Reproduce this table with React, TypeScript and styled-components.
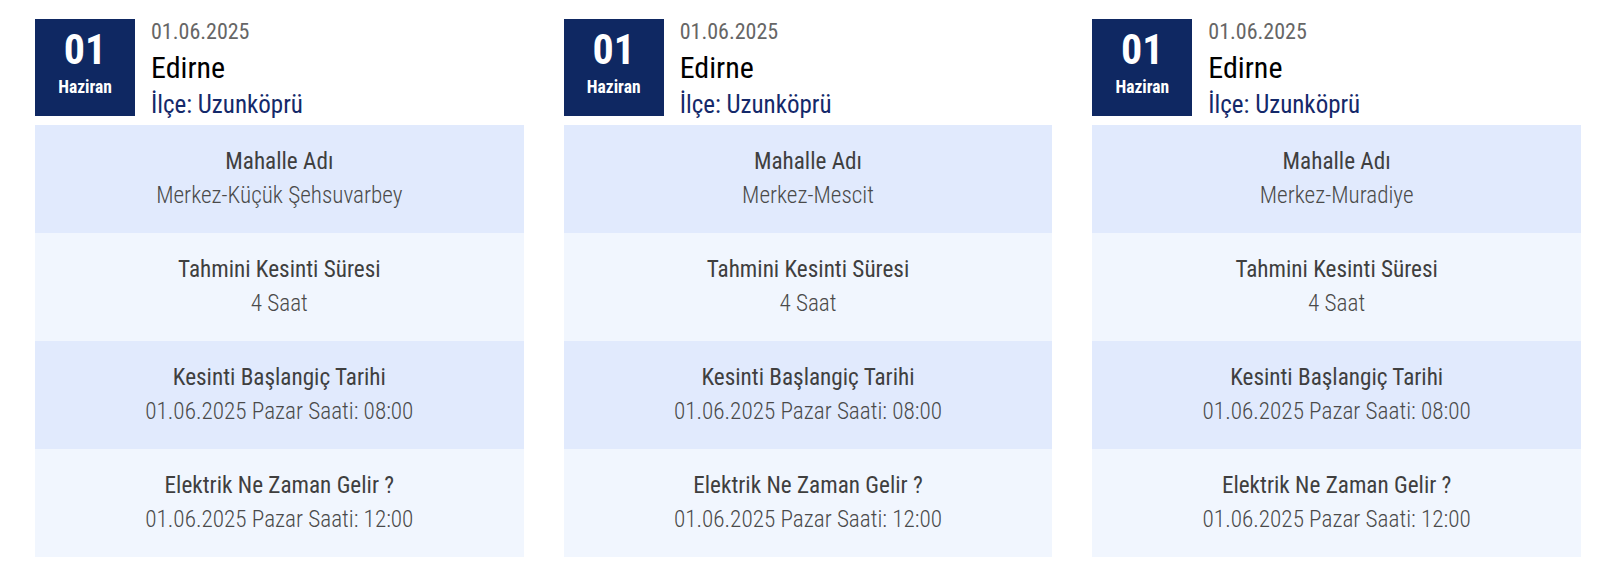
import React from "react";
import styled, { createGlobalStyle } from "styled-components";

const GlobalStyle = createGlobalStyle`
  html, body {
    margin: 0;
    padding: 0;
    background: #ffffff;
  }
  body {
    font-family: "Roboto Condensed", Roboto, "Liberation Sans", sans-serif;
    font-stretch: 75%;
  }
`;

const Page = styled.main`
  display: grid;
  grid-template-columns: repeat(3, 1fr);
  column-gap: 40px;
  padding: 19px 35px 0;
`;

const Card = styled.article`
  display: flex;
  flex-direction: column;
`;

const Header = styled.header`
  display: flex;
  align-items: flex-start;
  gap: 16px;
  margin-bottom: 5px;
`;

const DateBox = styled.div`
  flex: 0 0 100px;
  height: 97px;
  background: #0f2862;
  color: #ffffff;
  display: flex;
  flex-direction: column;
  align-items: center;
  padding-top: 6px;
  box-sizing: border-box;
`;

const Day = styled.span`
  font-size: 42px;
  line-height: 49px;
  font-weight: 700;
`;

const Month = styled.span`
  font-size: 17.5px;
  line-height: 20px;
  font-weight: 700;
  margin-top: 3px;
`;

const HeadText = styled.div`
  display: flex;
  flex-direction: column;
`;

const HeadDate = styled.span`
  font-size: 22px;
  line-height: 26px;
  color: #666666;
`;

const City = styled.span`
  font-size: 30px;
  line-height: 34px;
  margin-top: 6px;
  color: #000000;
`;

const District = styled.span`
  font-size: 25px;
  line-height: 30px;
  margin-top: 5px;
  color: #14296a;
`;

const InfoRow = styled.div<{ $shade: "dark" | "light" }>`
  height: 108px;
  box-sizing: border-box;
  padding: 19px 10px 0;
  background: ${(p) => (p.$shade === "dark" ? "#e1eafd" : "#f1f6fe")};
  display: flex;
  flex-direction: column;
  align-items: center;
  text-align: center;
`;

const Label = styled.span`
  font-size: 23.2px;
  line-height: 34px;
  font-weight: 400;
  color: #3f3f3f;
`;

const Value = styled.span`
  font-size: 23.2px;
  line-height: 34px;
  font-weight: 300;
  color: #4a4a4a;
`;

type Outage = {
  day: string;
  month: string;
  date: string;
  city: string;
  district: string;
  neighbourhood: string;
  duration: string;
  start: string;
  end: string;
};

const outages: Outage[] = [
  "Merkez-Küçük Şehsuvarbey",
  "Merkez-Mescit",
  "Merkez-Muradiye",
].map((n) => ({
  day: "01",
  month: "Haziran",
  date: "01.06.2025",
  city: "Edirne",
  district: "İlçe: Uzunköprü",
  neighbourhood: n,
  duration: "4 Saat",
  start: "01.06.2025 Pazar Saati: 08:00",
  end: "01.06.2025 Pazar Saati: 12:00",
}));

function OutageCard({ o }: { o: Outage }) {
  const rows: [string, string][] = [
    ["Mahalle Adı", o.neighbourhood],
    ["Tahmini Kesinti Süresi", o.duration],
    ["Kesinti Başlangiç Tarihi", o.start],
    ["Elektrik Ne Zaman Gelir ?", o.end],
  ];
  return (
    <Card>
      <Header>
        <DateBox>
          <Day>{o.day}</Day>
          <Month>{o.month}</Month>
        </DateBox>
        <HeadText>
          <HeadDate>{o.date}</HeadDate>
          <City>{o.city}</City>
          <District>{o.district}</District>
        </HeadText>
      </Header>
      {rows.map(([label, value], i) => (
        <InfoRow key={label} $shade={i % 2 === 0 ? "dark" : "light"}>
          <Label>{label}</Label>
          <Value>{value}</Value>
        </InfoRow>
      ))}
    </Card>
  );
}

export default function App() {
  return (
    <>
      <GlobalStyle />
      <Page>
        {outages.map((o) => (
          <OutageCard key={o.neighbourhood} o={o} />
        ))}
      </Page>
    </>
  );
}
